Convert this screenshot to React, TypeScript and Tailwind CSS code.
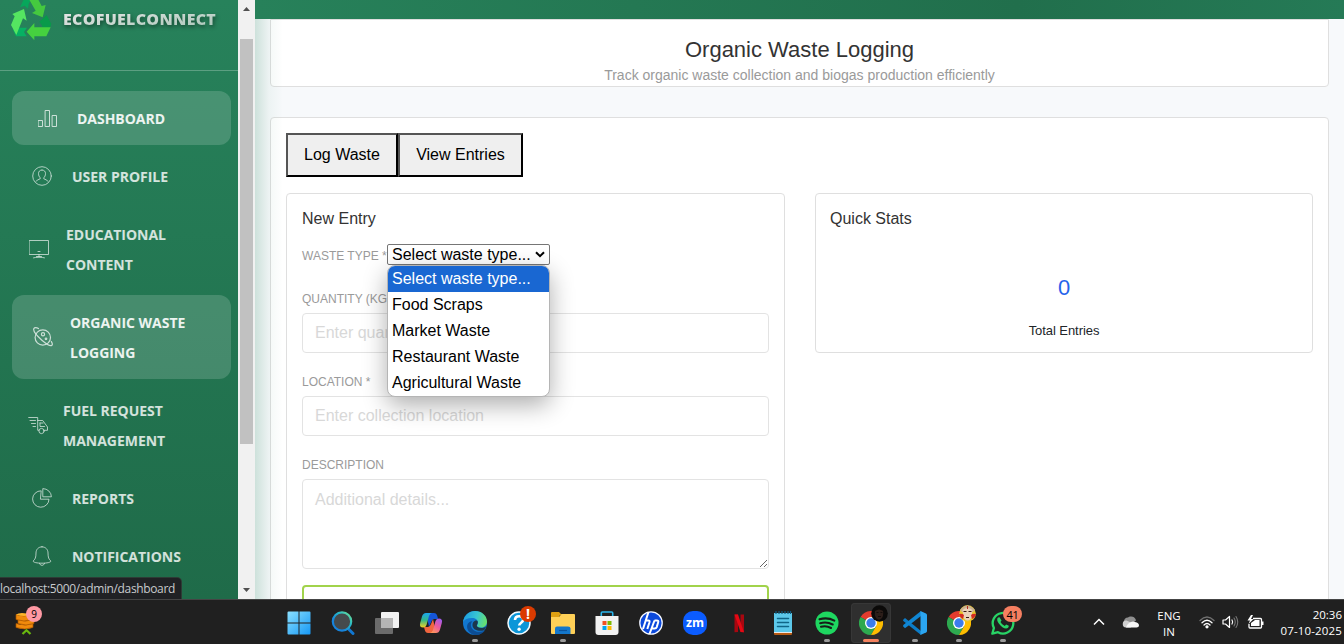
import React from "react";

type IconProps = { className?: string };

const stroke = {
  fill: "none",
  stroke: "currentColor",
  strokeWidth: 1,
  strokeLinecap: "round" as const,
  strokeLinejoin: "round" as const,
};

function GraphIcon({ className }: IconProps) {
  return (
    <svg width="21" height="20" viewBox="0 0 21 20" className={className} {...stroke}>
      <path d="M1.500 12.500h4v6h-4zM8.500 2.500h4v16h-4zM15.500 7.500h4v11h-4z" />
    </svg>
  );
}

function UserIcon({ className }: IconProps) {
  return (
    <svg width="20" height="20" viewBox="0 0 20 20" className={className} {...stroke}>
      <circle cx="10" cy="10" r="9.300" />
      <path d="M10 4c2.400 0 3.500 1.600 3.500 3.600 0 1.800-.8 3.300-1.700 4.200v1c1.500.6 3 1.200 4.300 2.600M10 4C7.600 4 6.500 5.600 6.500 7.600c0 1.800.8 3.300 1.700 4.200v1c-1.500.6-3 1.200-4.300 2.600" />
    </svg>
  );
}

function MonitorIcon({ className }: IconProps) {
  return (
    <svg width="20" height="20" viewBox="0 0 20 20" className={className} {...stroke}>
      <path d="M.5 1.500h19v14H.5zM9 12.500h2M10 15.500v2M7.500 17.500h5M4.500 18.800c2-.7 9-.7 11 0" />
    </svg>
  );
}

function ScienceIcon({ className }: IconProps) {
  return (
    <svg width="20" height="20" viewBox="0 0 20 20" className={className} {...stroke} strokeWidth={1.200}>
      <circle cx="9.800" cy="10.500" r="7.700" />
      <path d="M5.500 1.600C3.500.3 1.500.3.900 1.500c-1.200 2.400 3 7.300 8 11.700 4 3.400 8.200 6 9.800 5.200 1-.6.800-2-.3-3.800" />
      <circle cx="10" cy="7.300" r="1.600" />
      <circle cx="13" cy="11.800" r="0.800" />
    </svg>
  );
}

function TruckIcon({ className }: IconProps) {
  return (
    <svg width="20" height="20" viewBox="0 0 20 20" className={className} {...stroke}>
      <path d="M.7 2.500h9v12.800h1.200M2 5.500h5.500M3.500 8.500h4M5 11.500h2.500M9.700 5.500h5l4.800 6.500v3.300h-3.500M12 8v3.500h4.500M12 8h3" />
      <circle cx="13.500" cy="16" r="2.600" />
    </svg>
  );
}

function PieIcon({ className }: IconProps) {
  return (
    <svg width="20" height="20" viewBox="0 0 20 20" className={className} {...stroke}>
      <path d="M8.800 2.800A8.200 8.200 0 1 0 17 11.200H8.800z" />
      <path d="M11.200.6a8.300 8.300 0 0 1 8.200 8.200h-8.200z" />
    </svg>
  );
}

function BellIcon({ className }: IconProps) {
  return (
    <svg width="20" height="20" viewBox="0 0 20 20" className={className} {...stroke}>
      <path d="M10 .8c-3.700 0-6 2.800-6 6.200 0 4.300-.8 6.500-2.900 8 0 1.400 3.900 2.200 8.900 2.200s8.900-.8 8.900-2.200C16.800 13.500 16 11.300 16 7c0-3.400-2.300-6.200-6-6.200z" />
      <path d="M7.500 17.300c.3 1.300 1.200 2 2.500 2s2.200-.7 2.500-2" />
    </svg>
  );
}

function RecycleLogo() {
  return (
    <svg width="42" height="46" viewBox="30 -15 126 138" className="shrink-0">
      <path fill="#07a65b" d="M60 22 76-12h22L86 12 84 26 74 17z" />
      <path fill="#45c93f" d="M84-14h24l17 32 12-3-9 37-32-13 11-7L86-4z" />
      <path fill="#089a4a" d="m118 65 22-20 14 27-4 11h-22l-3-8z" />
      <path fill="#45d13f" d="m80 95 23-26v13h49l-13 27h-36v12z" />
      <path fill="#07b163" d="m48 109-9-20 19-6h23l-9 13 8 13z" />
      <path fill="#55e561" d="m37 42 35-15 8 35-11-7-20 50-16-30 11-26z" />
    </svg>
  );
}

const navItems = [
  { lines: ["DASHBOARD"], icon: GraphIcon, active: true, pad: "pl-[25px]", gap: "gap-[19px]" },
  { lines: ["USER PROFILE"], icon: UserIcon, active: false, pad: "pl-5", gap: "gap-5" },
  { lines: ["EDUCATIONAL", "CONTENT"], icon: MonitorIcon, active: false, pad: "pl-[17px]", gap: "gap-[17px]" },
  { lines: ["ORGANIC WASTE", "LOGGING"], icon: ScienceIcon, active: true, pad: "pl-[21px]", gap: "gap-[17px]" },
  { lines: ["FUEL REQUEST", "MANAGEMENT"], icon: TruckIcon, active: false, pad: "pl-4", gap: "gap-[15px]" },
  { lines: ["REPORTS"], icon: PieIcon, active: false, pad: "pl-5", gap: "gap-5" },
  { lines: ["NOTIFICATIONS"], icon: BellIcon, active: false, pad: "pl-5", gap: "gap-5" },
];

function Sidebar() {
  return (
    <aside className="flex h-full w-[238px] shrink-0 flex-col overflow-hidden bg-linear-to-b from-[#27825b] to-[#1f6b49]">
      <div className="flex h-[71px] shrink-0 items-start border-b border-white/25 pl-2.5">
        <div className="-mt-[5px] h-[46px]">
          <RecycleLogo />
        </div>
        <span className="ml-[11px] mt-2 whitespace-nowrap bg-linear-to-br from-[#eeeaec] to-[#a5c4b5] bg-clip-text font-['Open_Sans',sans-serif] text-[16px] font-extrabold leading-[22px] tracking-[0.28px] text-transparent drop-shadow-[1px_2px_2px_rgba(0,0,0,0.45)]">
          ECOFUELCONNECT
        </span>
      </div>
      <nav className="mt-5 flex flex-col gap-1 pl-3 pr-[7px]">
        {navItems.map(({ lines, icon: Icon, active, pad, gap }) => (
          <a
            key={lines[0]}
            className={`flex shrink-0 items-center rounded-xl pb-[11px] pt-[13px] ${pad} ${gap} ${
              active ? "bg-white/16 text-white/90" : "text-white/80"
            }`}
          >
            <Icon className="-mt-0.5 shrink-0 opacity-80" />
            <span className="font-['Open_Sans',sans-serif] text-[14px] font-bold leading-[30px] tracking-[-0.02px]">
              {lines.map((line) => (
                <span key={line} className="block whitespace-nowrap">
                  {line}
                </span>
              ))}
            </span>
          </a>
        ))}
      </nav>
    </aside>
  );
}

function Scrollbar() {
  return (
    <div className="flex h-full w-[17px] shrink-0 flex-col items-center justify-between bg-[#f1f1f1]">
      <div className="flex flex-col items-center">
        <svg width="17" height="17" viewBox="0 0 17 17" className="block">
          <path d="M8.500 7 12 11H5z" fill="#505050" />
        </svg>
        <div className="mt-[22px] h-[405px] w-[13px] bg-[#c1c1c1]" />
      </div>
      <svg width="17" height="17" viewBox="0 0 17 17" className="block">
        <path d="M8.500 10 12 6H5z" fill="#505050" />
      </svg>
    </div>
  );
}

const wasteTypes = ["Select waste type...", "Food Scraps", "Market Waste", "Restaurant Waste", "Agricultural Waste"];

function WasteSelect() {
  return (
    <div className="relative h-[21px] w-[163px]">
      <div className="flex h-[21px] items-center justify-between rounded-[2px] border border-[#767676] bg-white pl-1 pr-1 text-[16px] leading-[19px] text-black">
        <span className="whitespace-nowrap">Select waste type...</span>
        <svg width="10" height="7" viewBox="0 0 10 7">
          <path d="m1 1.200 4 4 4-4" fill="none" stroke="#000" strokeWidth="2" />
        </svg>
      </div>
      <ul className="absolute left-0 top-[21px] z-20 w-[163px] overflow-hidden rounded-lg border border-[#b5b5b5] bg-white shadow-[0_8px_24px_rgba(0,0,0,0.32)]">
        {wasteTypes.map((type, i) => (
          <li
            key={type}
            className={`h-[26px] whitespace-nowrap pl-1 text-[16px] leading-[26px] ${
              i === 0 ? "bg-[#1967d2] text-white" : "text-black"
            }`}
          >
            {type}
          </li>
        ))}
      </ul>
    </div>
  );
}

const labelClass = "block text-[12px] leading-[18px] text-[#9a9a9a] whitespace-nowrap";
const fieldClass =
  "block w-full rounded border border-[#e3e3e3] bg-white px-3 text-[16px] text-[#565656] placeholder:text-[#d8d8d8] outline-none";

function EntryForm() {
  return (
    <section className="h-[440px] w-[499px] rounded border border-[#dfdfdf] bg-white px-[15px] pt-[15px]">
      <h4 className="text-[16px] leading-[19px] text-[#333]">New Entry</h4>
      <div className="mt-4 flex h-[21px] items-center">
        <label className={`${labelClass} w-[85px] pt-0.5`}>WASTE TYPE *</label>
        <WasteSelect />
      </div>
      <div className="mt-[25px]">
        <label className={labelClass}>QUANTITY (KG) *</label>
        <input className={`${fieldClass} mt-[5px] h-10`} placeholder="Enter quantity" />
      </div>
      <div className="mt-5">
        <label className={labelClass}>LOCATION *</label>
        <input className={`${fieldClass} mt-[5px] h-10`} placeholder="Enter collection location" />
      </div>
      <div className="mt-5">
        <label className={labelClass}>DESCRIPTION</label>
        <textarea
          className={`${fieldClass} mt-[5px] h-[90px] resize py-2 leading-6`}
          placeholder="Additional details..."
        />
      </div>
      <button className="mt-4 block h-10 w-full rounded border-2 border-[#a1d34b]" />
    </section>
  );
}

function QuickStats() {
  return (
    <section className="h-40 w-[498px] rounded border border-[#dfdfdf] bg-white px-[15px] pt-[15px]">
      <h4 className="-ml-px text-[16px] leading-[19px] text-[#333]">Quick Stats</h4>
      <div className="mt-[47px] text-center text-[22px] leading-[26px] text-[#2563eb]">0</div>
      <div className="mt-[22px] text-center text-[13px] leading-4 tracking-[-0.07px] text-[#212529]">Total Entries</div>
    </section>
  );
}

function Content() {
  const tab =
    "flex h-11 items-center justify-center border-2 border-t-[#555] border-l-[#555] border-r-black border-b-black bg-[#efefef] text-[16px] text-black whitespace-nowrap";
  return (
    <main className="relative flex h-full min-w-0 flex-1 flex-col overflow-hidden bg-[#f7f9fb]">
      <div className="h-[19px] shrink-0 bg-linear-to-r from-[#27815a] via-[#216f4c] via-70% to-[#257a56]" />
      <div className="px-[15px]">
        <header className="h-[68px] rounded-b border border-[#dfdfdf] bg-white pt-4 text-center">
          <h1 className="text-[22px] leading-7 text-[#333]">Organic Waste Logging</h1>
          <p className="text-[14px] leading-[22px] text-[#9a9a9a]">Track organic waste collection and biogas production efficiently</p>
        </header>
        <div className="mt-[30px] h-[520px] rounded border border-[#dfdfdf] bg-white p-[15px]">
          <div className="flex">
            <button className={`${tab} w-28`}>Log Waste</button>
            <button className={`${tab} w-[125px]`}>View Entries</button>
          </div>
          <div className="mt-4 flex items-start gap-[30px]">
            <EntryForm />
            <QuickStats />
          </div>
        </div>
      </div>
      <div className="pointer-events-none absolute bottom-0 left-0 top-[19px] w-7 bg-linear-to-r from-[#27815a]/20 via-[#27815a]/5 to-transparent" />
    </main>
  );
}

function StartIcon() {
  return (
    <svg width="24" height="24" viewBox="0 0 24 24">
      <defs>
        <linearGradient id="win" x1="0" y1="0" x2="1" y2="1">
          <stop offset="0" stopColor="#8ae0ff" />
          <stop offset="1" stopColor="#1698f5" />
        </linearGradient>
      </defs>
      <path fill="url(#win)" d="M.5 1.500q0-1 1-1h10v11H.5zM12.500.5h10q1 0 1 1v10h-11zM.5 12.500h11v11h-10q-1 0-1-1zM12.500 12.500h11v10q0 1-1 1h-10z" />
    </svg>
  );
}

function SearchIcon() {
  return (
    <svg width="24" height="24" viewBox="0 0 24 24">
      <defs>
        <linearGradient id="sea" x1="0" y1="1" x2="1" y2="0">
          <stop offset="0.3" stopColor="#1683dc" />
          <stop offset="0.65" stopColor="#27b9c8" />
          <stop offset="1" stopColor="#76e08a" />
        </linearGradient>
      </defs>
      <path d="m17 17.500 5 5" stroke="#1177d1" strokeWidth="3" strokeLinecap="round" />
      <circle cx="11" cy="10.500" r="9.200" fill="#454a4c" stroke="url(#sea)" strokeWidth="2.200" />
    </svg>
  );
}

function TaskViewIcon() {
  return (
    <svg width="24" height="24" viewBox="0 0 24 24">
      <rect x="6" y="1" width="18" height="16" rx="1" fill="#f1f1f1" />
      <rect x="0" y="7" width="18" height="16" rx="1" fill="#6b6b6b" />
      <path d="M6 7h12v10H6z" fill="#b5b5b5" />
    </svg>
  );
}

function CopilotIcon() {
  return (
    <svg width="24" height="24" viewBox="0 0 24 24">
      <defs>
        <linearGradient id="cpa" x1="0" y1="0" x2="0" y2="1">
          <stop offset="0" stopColor="#1aa7f2" />
          <stop offset="0.5" stopColor="#35b985" />
          <stop offset="1" stopColor="#f4d124" />
        </linearGradient>
        <linearGradient id="cpb" x1="0.8" y1="0" x2="0.2" y2="1">
          <stop offset="0" stopColor="#a15bf0" />
          <stop offset="0.5" stopColor="#ec5b9c" />
          <stop offset="1" stopColor="#ff9a58" />
        </linearGradient>
      </defs>
      <path fill="#1455d8" d="M7 2h8q2.500 0 3.300 3l.8 3h-4q-2 0-3 3l-2 5z" />
      <path fill="#f1653f" d="M17 22H9q-2.500 0-3.200-3L5 16h4q2 0 3-3l2-5z" />
      <path fill="url(#cpa)" d="M7 2h6q-2 0-3 3L7.500 14q-.8 2.500-3.300 2.500Q0 16.500 1.200 12L3 5.500Q4 2 7 2z" />
      <path fill="url(#cpb)" d="M17 22h-6q2 0 3-3l2.500-9q.8-2.500 3.300-2.500Q24 7.500 22.800 12L21 18.500Q20 22 17 22z" />
    </svg>
  );
}

function EdgeIcon() {
  return (
    <svg width="24" height="24" viewBox="0 0 24 24">
      <defs>
        <linearGradient id="eda" x1="0" y1="0.3" x2="1" y2="0.5">
          <stop offset="0" stopColor="#1b9de2" />
          <stop offset="0.55" stopColor="#38c5d1" />
          <stop offset="1" stopColor="#68e06c" />
        </linearGradient>
      </defs>
      <circle cx="12" cy="12" r="12" fill="#1277cf" />
      <path fill="url(#eda)" d="M.1 11C.9 4.500 6 0 12 0c7 0 12 5 12 10.500 0 4-3 6-6 6-2.500 0-4-.8-4-1.800 0-.7 1-1.200 1-3.200 0-2.500-2.500-4.500-6-4.500C4.500 7 1.500 8.500.1 11z" />
      <path fill="#0c4d94" d="M9.500 10.300C7.500 12 7.300 15 9 17.500c2.500 3.700 8 4.200 12.800 2.200A12 12 0 0 1 12 24C7 23 3.500 19 4.200 14.500c.4-2.500 2.500-4.200 5.300-4.200z" />
      <path fill="#202020" d="M14.800 11c0 2-1 2.600-1 3.500 0 1.500 2 2.500 4.600 2.500 1.900 0 3.800-.7 4.800-1.800-.5 1.500-1.200 3-2 4-5.500 1.500-11.200-.2-11.700-4.700-.2-2.200.8-4 2.500-4.800 1.500-.3 2.800.2 2.800 1.300z" opacity=".75" />
    </svg>
  );
}

function HelpIcon() {
  return (
    <svg width="24" height="24" viewBox="0 0 24 24">
      <circle cx="12" cy="12" r="11" fill="#0c96d8" stroke="#f5fbff" strokeWidth="1.500" />
      <path d="M8 9c0-5 8.200-5 8.200-.4 0 3.200-4 3-4 6" fill="none" stroke="#fff" strokeWidth="2.600" />
      <circle cx="12.100" cy="18.200" r="1.700" fill="#fff" />
    </svg>
  );
}

function FolderIcon() {
  return (
    <svg width="24" height="24" viewBox="0 0 24 24">
      <path fill="#dfa012" d="M0 2q0-1 1-1h7l3 3h-2L8 6H0z" />
      <path fill="#ffd057" d="M0 6h8l2.500-3H23q1 0 1 1v18q0 1-1 1H1q-1 0-1-1z" />
      <path fill="#1477cb" d="M4 23v-5.500Q4 15.500 6 15.500h11q2.500 0 2.500 2V23z" />
      <path stroke="#0a549e" strokeWidth="1.200" d="M8 19.500h8" />
    </svg>
  );
}

function StoreIcon() {
  return (
    <svg width="24" height="24" viewBox="0 0 24 24">
      <path fill="none" stroke="#29b6ed" strokeWidth="1.600" d="M6.300 6V2q0-1 1-1h9.400q1 0 1 1v4" />
      <path fill="#f2f2f2" d="M.5 5h23v16q0 3-3 3h-17q-3 0-3-3z" />
      <path fill="#f25022" d="M7.500 10h4v4h-4z" />
      <path fill="#7fba00" d="M12.500 10h4v4h-4z" />
      <path fill="#00a4ef" d="M7.500 15h4v4h-4z" />
      <path fill="#ffb900" d="M12.500 15h4v4h-4z" />
    </svg>
  );
}

function HpIcon() {
  return (
    <svg width="24" height="24" viewBox="0 0 24 24">
      <circle cx="12" cy="12" r="11.200" fill="#0b49dc" stroke="#f4f7ff" strokeWidth="1.300" />
      <path d="M9.500 1 4 18M6.500 9.500h2.800q1.700 0 1.200 1.700L8.300 18M15.500 9.500 10.500 23M15.500 9.500h2.300q2 0 1.400 1.800l-1.500 4.800q-.5 1.400-2 1.400h-2.500" fill="none" stroke="#fff" strokeWidth="2" />
    </svg>
  );
}

function ZoomIcon() {
  return (
    <svg width="24" height="24" viewBox="0 0 24 24">
      <rect width="24" height="24" rx="10" fill="#0b5cff" />
      <text x="12" y="15.800" textAnchor="middle" fill="#fff" fontFamily="Open Sans, sans-serif" fontWeight="700" fontSize="11.500" textLength="18" lengthAdjust="spacingAndGlyphs">
        zm
      </text>
    </svg>
  );
}

function NetflixIcon() {
  return (
    <svg width="24" height="24" viewBox="0 0 24 24">
      <path fill="#a90710" d="M7.500 3.500H11v17.500l-3.500.3zM13.500 3.500H17v17.800l-3.500-.3z" />
      <path fill="#e50914" d="M7.500 3.500H11l6 17.800-3.500-.4z" />
    </svg>
  );
}

function NotepadIcon() {
  return (
    <svg width="24" height="24" viewBox="0 0 24 24">
      <path fill="#b85a13" d="M3 21h18v2q0 1-1 1H4q-1 0-1-1z" />
      <path fill="#e8e8e8" d="M3 20.500h18v1.500H3z" />
      <path fill="#5cc8ea" d="M3 2h18v19H3z" />
      <path d="M5 0v3M8 0v3M11 0v3M14 0v3M17 0v3M19.500 0v3" stroke="#125b7d" strokeWidth="1.200" />
      <path d="M6.500 7.500h11M6.500 11.500h11M6.500 15.500h11" stroke="#0f6587" strokeWidth="1.500" strokeLinecap="round" />
    </svg>
  );
}

function SpotifyIcon() {
  return (
    <svg width="24" height="24" viewBox="0 0 24 24">
      <circle cx="12" cy="12" r="11.500" fill="#1ed760" />
      <path d="M4.500 8.300c5-1.500 10.500-1 14.800 1.300M5.200 12.200c4.300-1.200 8.800-.7 12.500 1.300M6 15.800c3.500-.9 7-.5 10 1.200" fill="none" stroke="#171c19" strokeWidth="2.100" strokeLinecap="round" />
    </svg>
  );
}

function ChromeIcon() {
  return (
    <svg width="24" height="24" viewBox="0 0 24 24">
      <path fill="#e33b2e" d="M12 12 1.600 6A12 12 0 0 1 22.400 6z" />
      <path fill="#2da94f" d="M12 12 1.600 6A12 12 0 0 0 12 24l5.200-9z" />
      <path fill="#fdbd00" d="M12 12l5.200 3L12 24A12 12 0 0 0 22.400 6H12z" />
      <circle cx="12" cy="12" r="6" fill="#fff" />
      <circle cx="12" cy="12" r="4.700" fill="#3a7cec" />
    </svg>
  );
}

function CodeIcon() {
  return (
    <svg width="24" height="24" viewBox="0 0 24 24">
      <path fill="#0c7cc7" d="M0 9 2 7l16 13v4L.3 10z" />
      <path fill="#1086d3" d="M0 15.300 2 17.300 18 5V0L.3 14z" />
      <path fill="#2ba6f2" d="m17.500 0 5.500 2.500q1 .5 1 1.500v16q0 1-1 1.500L17.500 24z" />
    </svg>
  );
}

function WhatsappIcon() {
  return (
    <svg width="24" height="24" viewBox="0 0 24 24">
      <path d="M1.300 22.700 2.900 17A10.300 10.300 0 1 1 7 21.200z" fill="none" stroke="#28d466" strokeWidth="2.300" strokeLinejoin="round" />
      <path d="M8.500 6.300q-.8-.5-1.700.5c-1 1.300-.8 3.200 1 5.700 2.200 3 5 5 7.300 5 1.500 0 2.800-1.200 2.700-2.700l-2.700-1.400-1.300 1.500q-3-1.200-4.300-4l1-1.400z" fill="#28d466" />
    </svg>
  );
}

function PortraitDark() {
  return (
    <svg width="17" height="17" viewBox="0 0 17 17" className="absolute left-[22px] top-[5px]">
      <circle cx="8.500" cy="8.500" r="8.300" fill="#0b0a09" />
      <path d="M4 6q4-3 8 0 1 5-2 8-3 2-5-1-2-3-1-7z" fill="#2c1e19" />
      <path d="M5.500 7.500h2M9.500 7.500h2M7 11.500h3" stroke="#120c0a" />
    </svg>
  );
}

function PortraitMask() {
  return (
    <svg width="17" height="17" viewBox="0 0 17 17" className="absolute left-[22px] top-[5px]">
      <circle cx="8.500" cy="8.500" r="8.300" fill="#e8c52c" />
      <path d="M1 5q7-9 15 0l-2 2H3z" fill="#c9b291" />
      <path d="M3.500 5q5-4 10 0l-1 8q-4 5-8 0z" fill="#ead2b8" />
      <path d="M0 9q3-1 5 1l-1 4q-3-1-4-5zM17 9q-3-1-5 1l1 4q3-1 4-5z" fill="#d52c22" />
      <path d="M4.500 6.500h3M9.500 6.500h3M7 12.500h3" stroke="#371813" strokeWidth="1.200" />
      <path d="M8.500 1v3" stroke="#b32d20" strokeWidth="1" />
    </svg>
  );
}

const apps: { name: string; icon: () => React.ReactElement; running?: boolean }[] = [
  { name: "start", icon: StartIcon },
  { name: "search", icon: SearchIcon },
  { name: "taskview", icon: TaskViewIcon },
  { name: "copilot", icon: CopilotIcon },
  { name: "edge", icon: EdgeIcon, running: true },
  { name: "help", icon: HelpIcon },
  { name: "files", icon: FolderIcon, running: true },
  { name: "store", icon: StoreIcon },
  { name: "hp", icon: HpIcon },
  { name: "zoom", icon: ZoomIcon },
  { name: "netflix", icon: NetflixIcon },
  { name: "notepad", icon: NotepadIcon },
  { name: "spotify", icon: SpotifyIcon, running: true },
  { name: "chrome", icon: ChromeIcon },
  { name: "code", icon: CodeIcon, running: true },
  { name: "chrome2", icon: ChromeIcon, running: true },
  { name: "whatsapp", icon: WhatsappIcon, running: true },
];

function CoinsIcon() {
  return (
    <svg width="20" height="24" viewBox="0 0 20 24">
      <g fill="#f08a0c" stroke="#a85500" strokeWidth=".7">
        <path d="M1 12.500q9 3 17 0v4q-8 3-17 0z" />
        <path d="M3 8.500q7 3 16 0v4q-8 3-16 0z" />
        <path d="M1 3.500q8 3 16 0v5q-8 3-16 0z" />
      </g>
      <path d="M1 3.500q4-3 16 0-8 3-16 0z" fill="#ffb52b" />
      <path d="m7.500 23 4-3.800 4 3.800" fill="none" stroke="#69b80f" strokeWidth="2.200" />
    </svg>
  );
}

function Taskbar() {
  return (
    <footer className="flex h-[45px] w-full shrink-0 border-t border-[#454545] bg-[#202020] font-['Open_Sans',sans-serif] text-white">
      <div className="w-[277px] shrink-0">
        <div className="relative ml-[15px] mt-[11px] w-5">
          <CoinsIcon />
          <span className="absolute -top-[5px] left-[11px] flex size-4 items-center justify-center rounded-full bg-[#ff99a4] text-[10px] text-black">9</span>
        </div>
      </div>
      <div className="flex">
        {apps.map(({ name, icon: Icon, running }) => (
          <div key={name} className="relative flex h-11 w-11 shrink-0 flex-col items-center">
            <div
              className={`mt-[3px] flex h-10 w-10 shrink-0 flex-col items-center justify-between rounded pt-2 ${
                name === "chrome" ? "bg-[#2f2f2f] ring-1 ring-inset ring-[#373737]" : ""
              }`}
            >
              <Icon />
              {name === "chrome" && <span className="mb-px h-[3px] w-4 rounded-full bg-[#f5825f]" />}
              {running && <span className="mb-px h-[3px] w-1.5 rounded-full bg-[#9a9a9a]" />}
            </div>
            {name === "chrome" && <PortraitDark />}
            {name === "chrome2" && <PortraitMask />}
            {name === "help" && (
              <span className="absolute left-[23px] top-1.5 flex size-4 items-center justify-center rounded-full bg-[#da3b01] text-[14px] font-bold leading-none">
                !
              </span>
            )}
            {name === "whatsapp" && (
              <span className="absolute left-[22px] top-1.5 flex h-4 w-[19px] items-center justify-center rounded-full bg-[#f57f61] text-[11px] leading-none tracking-tight text-black">
                41
              </span>
            )}
          </div>
        ))}
      </div>
      <div className="flex flex-1 items-center justify-end pr-0.5">
        <svg width="12" height="8" viewBox="0 0 12 8" className="mr-[17px]">
          <path d="m1 6.500 5-5 5 5" fill="none" stroke="#fff" strokeWidth="1.500" />
        </svg>
        <svg width="17" height="12" viewBox="0 0 17 12" className="mr-[17px]">
          <path fill="#8f8f8f" d="M2 6a4 4 0 0 1 4-4.500 5 5 0 0 1 8 3L8 9z" />
          <path fill="#cfcfcf" d="M4 11.500a3.500 3.500 0 1 1 .5-7l9 4-5 3z" />
          <path fill="#f6f6f6" d="M4 11.500q1-4 5-5.500 2-1 4 0 4 .5 4 3.500 0 2-2.500 2z" />
        </svg>
        <div className="mr-[17px] w-[26px] pt-[3px] text-center text-[11.500px] leading-4">
          <div>ENG</div>
          <div>IN</div>
        </div>
        <svg width="16" height="14" viewBox="0 0 16 14" className="mr-[7px]" fill="none" strokeWidth="1.300" strokeLinecap="round">
          <path d="M1 5.500q7-7 14 0" stroke="#707070" />
          <path d="M3 7.800q5-5 10 0M5 10q3-3 6 0" stroke="#fff" />
          <circle cx="8" cy="11.800" r="1" fill="#fff" stroke="#fff" />
        </svg>
        <svg width="17" height="14" viewBox="0 0 17 14" className="mr-2" fill="none" strokeLinecap="round" strokeLinejoin="round">
          <path d="M1 5h2.500l4-3.500v11L3.500 9H1zM10 5q1.300 2 0 4" stroke="#fff" strokeWidth="1.200" />
          <path d="M12 3q2.500 4 0 8M14 1.500q3.500 5.500 0 11" stroke="#777" strokeWidth="1.100" />
        </svg>
        <svg width="17" height="15" viewBox="0 0 17 15" className="mr-[15px]" fill="none">
          <path d="M6 3.500h7.500q1 0 1 1V12q0 1-1 1H3q-1 0-1-1V9" stroke="#fff" strokeWidth="1.300" />
          <path d="M15 6.500h1.500v3.500H15z" fill="#fff" />
          <path d="M4 11V8l4-3h4.500v6z" fill="#fff" />
          <path d="M4 0 .5 5.500H3L1.500 9 6.500 4H4L6 0z" fill="#fff" />
        </svg>
        <div className="w-[63px] whitespace-nowrap pt-0.5 text-right text-[11.500px] leading-4">
          <div>20:36</div>
          <div className="flex justify-end tracking-[0.15px]">07-10-2025</div>
        </div>
      </div>
    </footer>
  );
}

export default function App() {
  return (
    <div className="flex h-[644px] w-[1344px] flex-col overflow-hidden bg-white font-['Liberation_Sans',Arial,sans-serif]">
      <div className="relative flex h-[599px] w-full shrink-0 overflow-hidden">
        <Sidebar />
        <Scrollbar />
        <Content />
        <div className="absolute bottom-0 left-0 flex h-[21px] w-[181px] items-center whitespace-nowrap rounded-tr bg-[#202124] font-['Open_Sans',sans-serif] text-[12px] tracking-[-0.36px] text-[#c8cacd] ring-1 ring-[#2d3b35]">
          localhost:5000/admin/dashboard
        </div>
      </div>
      <Taskbar />
    </div>
  );
}
